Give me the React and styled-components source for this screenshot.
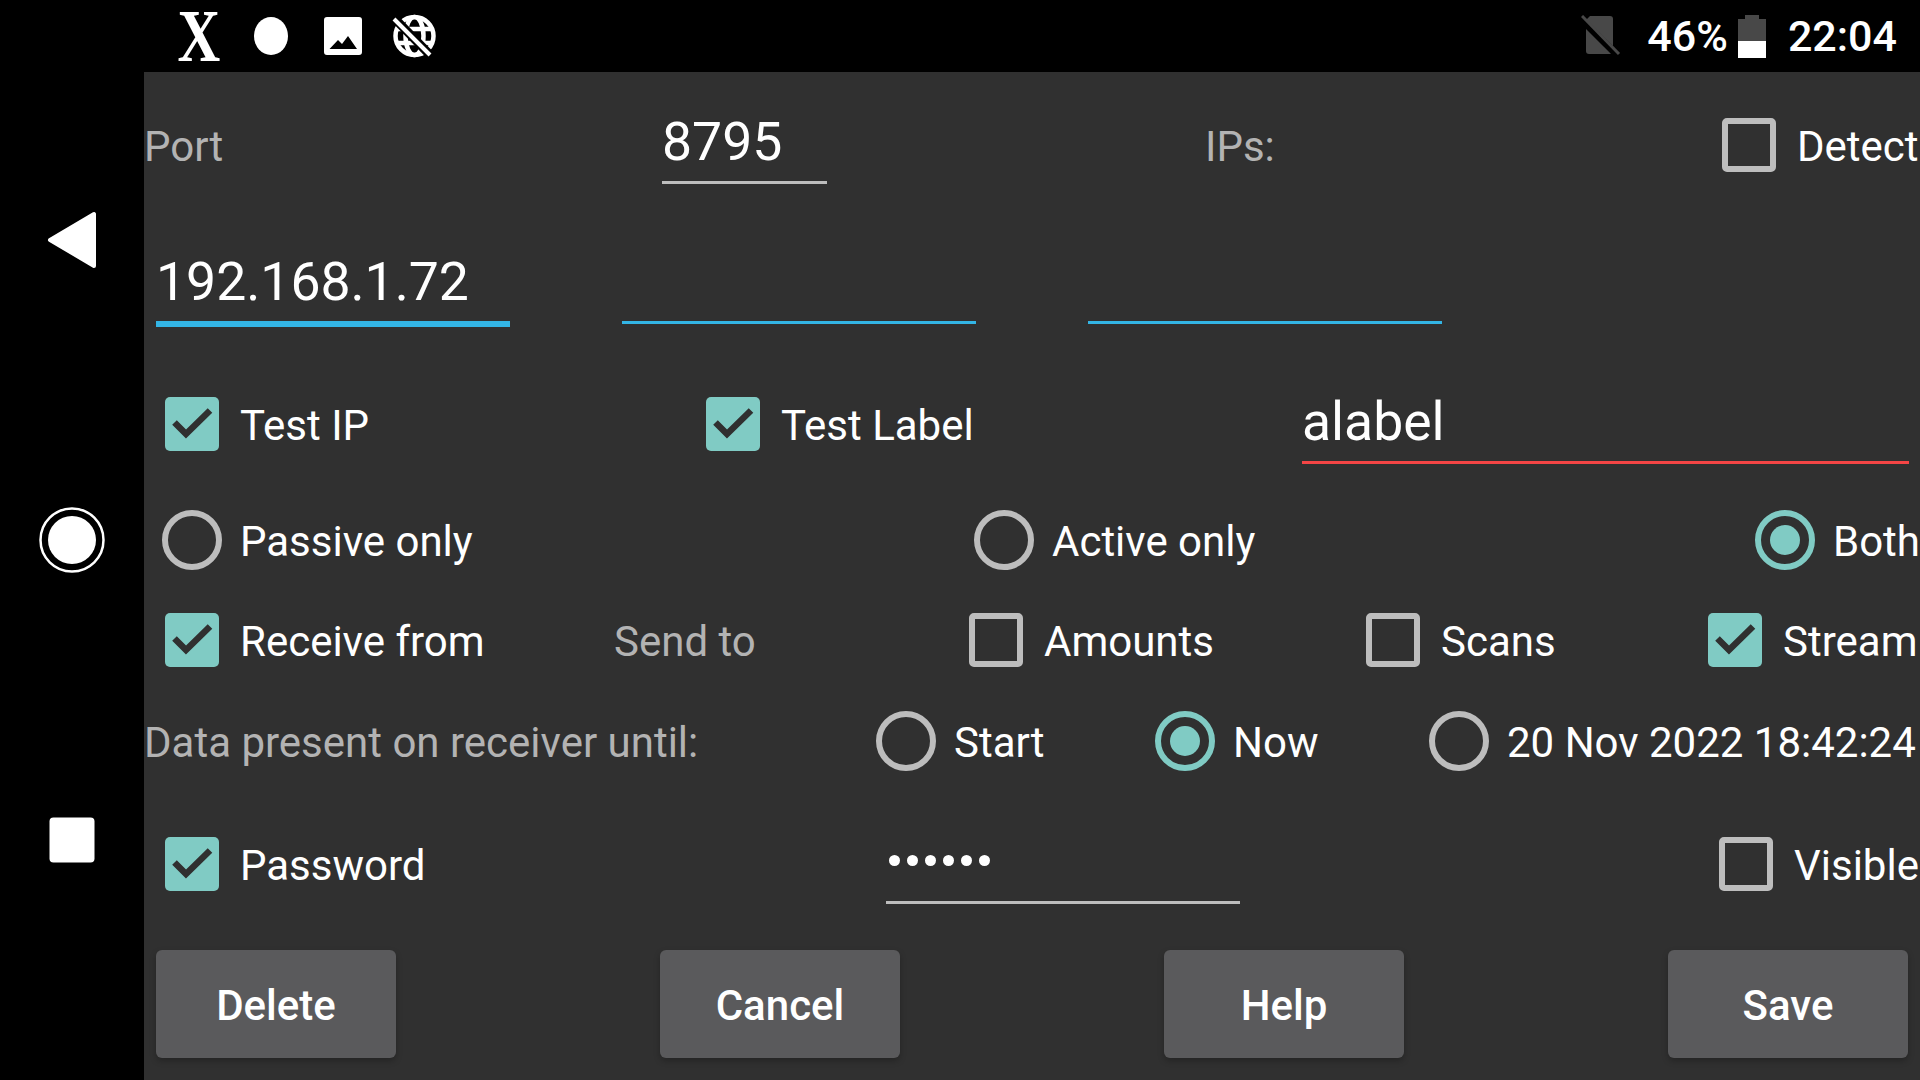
import styled, { createGlobalStyle } from 'styled-components'

const GlobalStyle = createGlobalStyle`
  html, body {
    margin: 0;
    padding: 0;
    background: #000;
  }

  body {
    font-family: Roboto, "Liberation Sans", sans-serif;
    overflow: hidden;
  }
`

const Screen = styled.div`
  display: flex;
  width: 1920px;
  height: 1080px;
  background: #000;
  overflow: hidden;
`

const NavRail = styled.nav`
  flex: 0 0 144px;
  display: flex;
  flex-direction: column;
  padding: 90px 0;
  box-sizing: border-box;
`

const NavSlot = styled.div`
  flex: 1;
  display: flex;
  align-items: center;
  justify-content: center;
`

const Main = styled.div`
  flex: 1;
  min-width: 0;
  display: flex;
  flex-direction: column;
`

const StatusBar = styled.header`
  flex: 0 0 72px;
  display: flex;
  align-items: center;
  padding: 0 23px 0 28px;
  color: #fff;
  font-size: 43px;
  font-weight: 500;
`

const StatusIcons = styled.div`
  display: flex;
  align-items: center;
  flex: 1;
`

const StatusRight = styled.div`
  display: flex;
  align-items: center;
`

const Content = styled.main`
  flex: 1;
  background: #303030;
  overflow: hidden;
  font-size: 42px;
  color: #fff;
`

const Row = styled.div`
  display: grid;
  grid-template-columns: ${(p) => p.$cols};
  height: ${(p) => p.$h}px;
  align-items: center;
  white-space: nowrap;
`

const Label = styled.span`
  display: block;
  padding-top: 4px;
  color: ${(p) => (p.$muted ? '#b3b3b3' : '#fff')};
  line-height: 48px;
`

const Field = styled.div`
  height: ${(p) => p.$h || 78}px;
  display: flex;
  align-items: flex-end;
  padding-bottom: 7px;
  box-sizing: border-box;
  font-size: 53.5px;
  line-height: 64px;
  color: #fff;
  border-bottom: 3px solid ${(p) => p.$line || '#bdbdbd'};
  box-shadow: ${(p) => (p.$focused ? `0 3px 0 ${p.$line}` : 'none')};
`

const Choice = styled.div`
  display: flex;
  align-items: center;
  gap: ${(p) => p.$gap}px;
`

const CheckBox = styled.span`
  flex: 0 0 54px;
  width: 54px;
  height: 54px;
  box-sizing: border-box;
  border-radius: 5px;
  display: flex;
  background: ${(p) => (p.$on ? '#80cbc4' : 'transparent')};
  border: ${(p) => (p.$on ? 'none' : '6px solid #bdbdbd')};
`

const RadioRing = styled.span`
  flex: 0 0 60px;
  width: 60px;
  height: 60px;
  box-sizing: border-box;
  border-radius: 50%;
  display: flex;
  align-items: center;
  justify-content: center;
  border: 6px solid ${(p) => (p.$on ? '#80cbc4' : '#bdbdbd')};

  &::after {
    content: '';
    display: ${(p) => (p.$on ? 'block' : 'none')};
    width: 30px;
    height: 30px;
    border-radius: 50%;
    background: #80cbc4;
  }
`

const Dots = styled.span`
  display: flex;
  gap: 7px;
  margin: 0 0 28px 3px;

  i {
    width: 11px;
    height: 11px;
    border-radius: 50%;
    background: #fff;
  }
`

const ButtonRow = styled.div`
  display: flex;
  justify-content: space-between;
  padding: 0 12px;
  margin-top: 10px;
`

const Button = styled.button`
  width: 240px;
  height: 108px;
  padding: 2px 0 0;
  border: none;
  border-radius: 6px;
  background: #5a5a5c;
  color: #fff;
  font-family: inherit;
  font-size: 42px;
  font-weight: 500;
  box-shadow: 0 3px 6px rgba(0, 0, 0, 0.25);
`

const Check = ({ on }) => (
  <CheckBox $on={on}>
    {on && (
      <svg width="54" height="54" viewBox="0 0 54 54">
        <path d="M9.5 25.5 L21 37 L45 13.5" fill="none" stroke="#303030" strokeWidth="6.5" />
      </svg>
    )}
  </CheckBox>
)

const CheckItem = ({ on, children }) => (
  <Choice $gap={21}>
    <Check on={on} />
    <Label>{children}</Label>
  </Choice>
)

const RadioItem = ({ on, children }) => (
  <Choice $gap={18}>
    <RadioRing $on={on} />
    <Label>{children}</Label>
  </Choice>
)

const StatusDot = styled.span`
  width: 34px;
  height: 38px;
  margin-left: 28px;
  border-radius: 50%;
  background: #fff;
`

const BigX = styled.span`
  font-family: "Liberation Serif", serif;
  font-size: 74px;
  font-weight: 700;
  line-height: 72px;
  width: 54px;
  text-align: center;
  transform: scaleX(0.8);
`

const ImageIcon = styled.svg`
  margin-left: 36px;
`

const GlobeIcon = styled.svg`
  margin-left: 30px;
`

const BatteryIcon = styled.svg`
  margin-left: 10px;
`

const Percent = styled.span`
  margin-left: 26px;
`

const Clock = styled.span`
  margin-left: 22px;
`

export default function App() {
  return (
    <Screen>
      <GlobalStyle />
      <NavRail>
        <NavSlot>
          <svg width="52" height="60" viewBox="0 0 52 60">
            <path d="M48 4 L48 56 L4 30 Z" fill="#fff" stroke="#fff" strokeWidth="4" strokeLinejoin="round" />
          </svg>
        </NavSlot>
        <NavSlot>
          <svg width="66" height="66" viewBox="0 0 66 66">
            <circle cx="33" cy="33" r="31.5" fill="none" stroke="#fff" strokeWidth="2.5" />
            <circle cx="33" cy="33" r="24" fill="#fff" />
          </svg>
        </NavSlot>
        <NavSlot>
          <svg width="46" height="46" viewBox="0 0 46 46">
            <rect x="0.5" y="0.5" width="45" height="45" rx="4" fill="#fff" />
          </svg>
        </NavSlot>
      </NavRail>
      <Main>
        <StatusBar>
          <StatusIcons>
            <BigX>X</BigX>
            <StatusDot />
            <ImageIcon width="38" height="38" viewBox="0 0 38 38">
              <path
                fillRule="evenodd"
                d="M3 0H35A3 3 0 0 1 38 3V35A3 3 0 0 1 35 38H3A3 3 0 0 1 0 35V3A3 3 0 0 1 3 0ZM5.5 32H33L24 19L18 27L14 23Z"
                fill="#fff"
              />
            </ImageIcon>
            <GlobeIcon width="44" height="44" viewBox="0 0 44 44">
              <g fill="none" stroke="#fff" strokeWidth="4.5">
                <circle cx="22.5" cy="22" r="19" />
                <ellipse cx="22.5" cy="22" rx="9" ry="19" />
                <path d="M5 15H40M5 29H40" />
              </g>
              <path d="M3 5L38 41" stroke="#000" strokeWidth="9" />
              <path d="M2 5L38 41" stroke="#fff" strokeWidth="4" />
            </GlobeIcon>
          </StatusIcons>
          <StatusRight>
            <svg width="40" height="42" viewBox="0 0 40 42">
              <path d="M9 1H29A3 3 0 0 1 32 4V36A3 3 0 0 1 29 39H8A3 3 0 0 1 5 36V5Z" fill="#484848" />
              <path d="M-1 3L37 41" stroke="#000" strokeWidth="7" />
              <path d="M1 1L38 39" stroke="#484848" strokeWidth="3" />
            </svg>
            <Percent>46%</Percent>
            <BatteryIcon width="28" height="43" viewBox="0 0 28 43">
              <path d="M7 0H21V4H28V26H0V4H7Z" fill="#484848" />
              <rect x="0" y="26" width="28" height="17" fill="#fff" />
            </BatteryIcon>
            <Clock>22:04</Clock>
          </StatusRight>
        </StatusBar>
        <Content>
          <Row $h={146} $cols="518px 165px 378px 517px 1fr">
            <Label $muted>Port</Label>
            <Field>8795</Field>
            <span />
            <Label $muted>IPs:</Label>
            <CheckItem>Detect</CheckItem>
          </Row>
          <Row $h={136} $cols="12px 354px 112px 354px 112px 354px 1fr">
            <span />
            <Field $h={76} $line="#33b5e5" $focused>192.168.1.72</Field>
            <span />
            <Field $h={76} $line="#33b5e5" />
            <span />
            <Field $h={76} $line="#33b5e5" />
          </Row>
          <Row $h={140} $cols="21px 541px 596px 607px 1fr">
            <span />
            <CheckItem on>Test IP</CheckItem>
            <CheckItem on>Test Label</CheckItem>
            <Field $h={80} $line="#f44545">alabel</Field>
          </Row>
          <Row $h={92} $cols="18px 812px 781px 1fr">
            <span />
            <RadioItem>Passive only</RadioItem>
            <RadioItem>Active only</RadioItem>
            <RadioItem on>Both</RadioItem>
          </Row>
          <Row $h={108} $cols="21px 449px 355px 397px 342px 1fr">
            <span />
            <CheckItem on>Receive from</CheckItem>
            <Label $muted>Send to</Label>
            <CheckItem>Amounts</CheckItem>
            <CheckItem>Scans</CheckItem>
            <CheckItem on>Stream</CheckItem>
          </Row>
          <Row $h={94} $cols="732px 279px 274px 1fr">
            <Label $muted>Data present on receiver until:</Label>
            <RadioItem>Start</RadioItem>
            <RadioItem on>Now</RadioItem>
            <RadioItem>20 Nov 2022 18:42:24</RadioItem>
          </Row>
          <Row $h={152} $cols="21px 721px 354px 479px 1fr">
            <span />
            <CheckItem on>Password</CheckItem>
            <Field $h={80}>
              <Dots>
                <i /><i /><i /><i /><i /><i />
              </Dots>
            </Field>
            <span />
            <CheckItem>Visible</CheckItem>
          </Row>
          <ButtonRow>
            <Button>Delete</Button>
            <Button>Cancel</Button>
            <Button>Help</Button>
            <Button>Save</Button>
          </ButtonRow>
        </Content>
      </Main>
    </Screen>
  )
}
